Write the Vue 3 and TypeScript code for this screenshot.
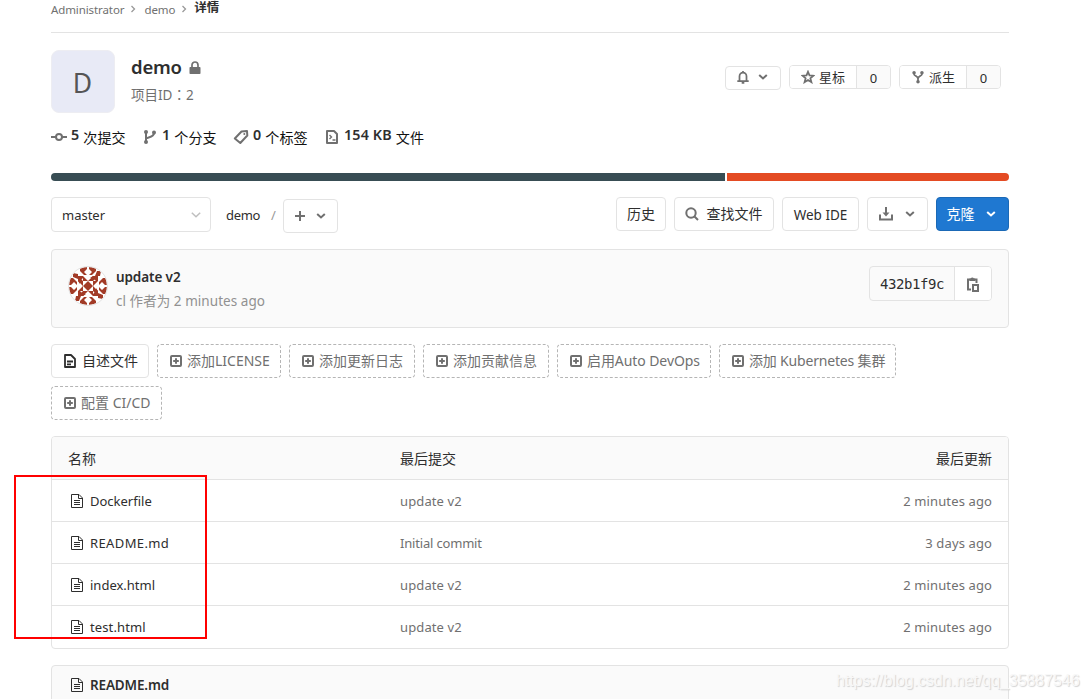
<script setup lang="ts">
interface FileRow { name: string; commit: string; updated: string; nameFit: string; commitFit: string }
interface Suggestion { label: string; width: number; fit?: string }

const files: FileRow[] = [
  { name: 'Dockerfile', commit: 'update v2', updated: '2 minutes ago', nameFit: 'even', commitFit: 'loose' },
  { name: 'README.md', commit: 'Initial commit', updated: '3 days ago', nameFit: 'wide', commitFit: 'tight' },
  { name: 'index.html', commit: 'update v2', updated: '2 minutes ago', nameFit: 'even', commitFit: 'loose' },
  { name: 'test.html', commit: 'update v2', updated: '2 minutes ago', nameFit: 'loose', commitFit: 'loose' },
]
const suggestions: Suggestion[] = [
  { label: '添加LICENSE', width: 124 },
  { label: '添加更新日志', width: 126 },
  { label: '添加贡献信息', width: 126 },
  { label: '启用Auto DevOps', width: 154, fit: 'snug' },
  { label: '添加 Kubernetes 集群', width: 177, fit: 'tight' },
  { label: '配置 CI/CD', width: 111 },
]
</script>

<template>
  <div class="page">
    <nav class="crumbs">
      <span>Administrator</span>
      <svg class="sep" viewBox="0 0 6 8"><path d="M1.500 1l3 3-3 3" /></svg>
      <span>demo</span>
      <svg class="sep" viewBox="0 0 6 8"><path d="M1.500 1l3 3-3 3" /></svg>
      <strong>详情</strong>
    </nav>

    <header class="project">
      <div class="avatar">D</div>
      <div class="title">
        <h1>demo
          <svg class="lock" viewBox="0 0 12 14"><path d="M1.300 6h9.400a.8.800 0 0 1 .8.800v5.400a.8.800 0 0 1-.8.800H1.300a.8.800 0 0 1-.8-.8V6.800a.8.800 0 0 1 .8-.8z" fill="#707070" /><path d="M3 6.500V4a3 3 0 0 1 6 0v2.500" fill="none" stroke="#707070" stroke-width="1.700" /></svg>
        </h1>
        <p>项目ID<span class="colon">：</span>2</p>
      </div>
      <div class="actions">
        <button class="bell">
          <svg class="i14" viewBox="0 0 16 16"><path d="M4 12V7a4 4 0 0 1 8 0v5M1.500 12.700h13M8 1v2M6.500 14.700h3" class="s" /></svg>
          <svg class="chev" viewBox="0 0 10 6"><path d="M1.200 1l3.800 3.500L8.800 1" /></svg>
        </button>
        <div class="counter">
          <button><svg class="i14" viewBox="0 0 16 16"><path d="M8 2l1.700 4.200 4.500.300-3.500 2.900 1.200 4.500L8 11.400l-3.900 2.500 1.200-4.500L1.800 6.500l4.500-.3z" class="s" /></svg>星标</button><span>0</span>
        </div>
        <div class="counter">
          <button><svg class="i14" viewBox="0 0 16 16"><path d="M3.500 3v1.500C3.500 7 8 7 8 10v3M12.500 3v1.500C12.500 7 8 7 8 10" class="s" /><circle cx="3.500" cy="3" r="2" class="f" /><circle cx="12.500" cy="3" r="2" class="f" /><circle cx="8" cy="13.500" r="2" class="f" /></svg>派生</button><span>0</span>
        </div>
      </div>
    </header>

    <div class="stats">
      <div class="stat"><svg viewBox="0 0 16 16"><path d="M0 8h5M11 8h5" class="s" /><circle cx="8" cy="8" r="3" class="s" /></svg><b>5</b><span>次提交</span></div>
      <div class="stat"><svg viewBox="0 0 16 16"><path d="M4 3v10M4 10c0-2 8-1 8-6" class="s" /><circle cx="4" cy="3" r="2" class="f" /><circle cx="12" cy="3.500" r="2" class="f" /><circle cx="4" cy="13" r="2" class="f" /></svg><b>1</b><span>个分支</span></div>
      <div class="stat"><svg viewBox="0 0 16 16"><path d="M8.500 2.500l5.500-.5.300 4.500-7 7.500-5.500-4.500z" class="s" stroke-linejoin="round" /><circle cx="11.300" cy="5" r="1" class="f" /></svg><b>0</b><span>个标签</span></div>
      <div class="stat"><svg viewBox="0 0 16 16"><path d="M3 2h7l3 3v9H3z" class="s" stroke-linejoin="round" /><path d="M5.500 6l2 2-2 2M8.500 11h3" class="s thin" /></svg><b>154 KB</b><span>文件</span></div>
    </div>

    <div class="langs"><i class="docker"></i><i class="html"></i></div>

    <div class="tree">
      <button class="branch"><span>master</span><svg class="chev light" viewBox="0 0 10 6"><path d="M.8.800L5 4.800 9.200.800" /></svg></button>
      <span class="path">demo</span><span class="slash">/</span>
      <button class="add"><svg class="plus" viewBox="0 0 10 10"><path d="M5 0v10M0 5h10" class="s" /></svg><svg class="chev" viewBox="0 0 10 6"><path d="M1.200 1l3.800 3.500L8.800 1" /></svg></button>
      <div class="tools">
        <button class="w50">历史</button>
        <button class="w100"><svg class="search" viewBox="0 0 14 14"><circle cx="6" cy="6" r="4.700" class="s" /><path d="M9.500 9.500l3.500 3.500" class="s" /></svg>查找文件</button>
        <button class="w77">Web IDE</button>
        <button class="w61"><svg class="i14" viewBox="0 0 14 14"><path d="M7 0v7M1 7.500v5h12v-5" class="s" /><path d="M3.500 5.500h7L7 9.500z" class="f" /></svg><svg class="chev" viewBox="0 0 10 6"><path d="M1.200 1l3.800 3.500L8.800 1" /></svg></button>
        <button class="clone">克隆<svg class="chev" viewBox="0 0 10 6"><path d="M1.200 1l3.800 3.500L8.800 1" /></svg></button>
      </div>
    </div>

    <section class="commit">
      <svg class="identicon" viewBox="0 0 40 40">
        <defs><clipPath id="face"><circle cx="20" cy="20" r="19" /></clipPath></defs>
        <circle cx="20" cy="20" r="19.500" fill="#fff" />
        <g clip-path="url(#face)" fill="#a23b27">
          <path d="M20 15l5 5-5 5-5-5z" />
          <g v-for="r in [0, 90, 180, 270]" :key="r" :transform="`rotate(${r} 20 20)`">
            <path d="M10 10h5l5 5h-5v-3l-3 3v3l-2-3zM30 10h-5l-5 5h5zM12 1l7-1v3l-3 3 3 3h-3l-4-4zM28 1l-7-1v3l3 3-3 3h3l4-4zM5 7l5 1v5l-5-2z" />
          </g>
        </g>
        <circle cx="20" cy="20" r="19.500" fill="none" stroke="#e3e3e3" />
      </svg>
      <div class="info"><strong>update v2</strong><p>cl 作者为 2 minutes ago</p></div>
      <div class="sha"><code>432b1f9c</code><button><svg viewBox="0 0 14 16"><path d="M5 13.500H2v-10h8.500V7" class="s" /><path d="M3.500 2.500h1.200a1.800 1.800 0 0 1 3.200 0h1.300V5H3.500z" class="f" /><path d="M7 9h5v6H7z" class="s" /></svg></button></div>
    </section>

    <div class="suggest">
      <button class="readme"><svg viewBox="0 0 12 14"><path d="M1 1h6l4 4v8H1z" class="s" stroke-linejoin="round" /><path d="M3 7.500h6M3 10.300h4" class="s" /></svg>自述文件</button>
      <button v-for="s in suggestions" :key="s.label" class="dashed" :style="{ width: s.width + 'px' }"><svg viewBox="0 0 12 12"><rect x="1" y="1" width="10" height="10" rx="1" class="s" /><path d="M6 3.200v5.600M3.200 6h5.600" class="s" /></svg><span :class="s.fit">{{ s.label }}</span></button>
    </div>

    <section class="files">
      <div class="row head"><span class="name">名称</span><span class="msg">最后提交</span><span class="when">最后更新</span></div>
      <div v-for="f in files" :key="f.name" class="row">
        <span class="name"><svg class="doc" viewBox="0 0 12 14"><path d="M.5.500h7.500l3.500 3.500v9.500H.5zM7.500.500V4.500h4M3 6.500h6M3 8.500h6M3 10.500h6" /></svg><span :class="f.nameFit">{{ f.name }}</span></span>
        <span class="msg" :class="f.commitFit">{{ f.commit }}</span><span class="when loose">{{ f.updated }}</span>
      </div>
    </section>

    <section class="readme-box"><svg class="doc" viewBox="0 0 12 14"><path d="M.5.500h7.500l3.500 3.500v9.500H.5zM7.500.500V4.500h4M3 6.500h6M3 8.500h6M3 10.500h6" /></svg><strong>README.md</strong></section>

    <div class="highlight"></div>
    <div class="watermark">https://blog.csdn.net/qq_35887546</div>
  </div>
</template>

<style>
body { background: #fff; overflow: hidden; }
</style>
<style scoped>
* { box-sizing: border-box; }
.page { position: relative; width: 1089px; height: 699px; overflow: hidden; padding: 0 80px 0 51px; font: 14px/20px "Noto Sans", "Noto Sans CJK SC", sans-serif; color: #2e2e2e; }
button { font: inherit; color: inherit; background: #fff; border: 1px solid #e3e3e3; border-radius: 4px; padding: 0; display: flex; align-items: center; white-space: nowrap; }
svg { flex: none; display: block; }
p, h1 { margin: 0; }
.s { fill: none; stroke: #707070; stroke-width: 2; }
.thin { stroke-width: 1.4; }
.f { fill: #707070; }
.chev { width: 10px; height: 6px; }
.chev path { fill: none; stroke: #707070; stroke-width: 2; }
.chev.light path { stroke: #bfbfbf; stroke-width: 1.5; }
.i14 { width: 14px; height: 14px; }
.tight { letter-spacing: -.18px; }
.snug { letter-spacing: -.08px; }
.even { letter-spacing: 0; }
.loose { letter-spacing: .12px; }
.wide { letter-spacing: .38px; }

.crumbs { height: 33px; border-bottom: 1px solid #e3e3e3; display: flex; align-items: flex-start; font-size: 11.5px; color: #707070; }
.crumbs span { letter-spacing: -.1px; }
.crumbs strong { color: #2e2e2e; font-size: 12.5px; margin: -2px 0 0 -1px; }
.sep { width: 6px; height: 8px; margin: 5px 8px 0 6px; }
.sep path { fill: none; stroke: #999; stroke-width: 1.3; }

.project { height: 80px; padding-top: 17px; display: flex; }
.avatar { width: 64px; height: 63px; border-radius: 8px; background: #e8eaf6; border: 1px solid #ededf2; color: #555; font-size: 26.5px; display: flex; align-items: center; justify-content: center; padding: 2px 1px 0 0; }
.title { margin-left: 16px; flex: 1; }
h1 { font-size: 18.5px; line-height: 24px; font-weight: 600; display: flex; align-items: center; margin-top: 5px; letter-spacing: -.2px; }
.lock { width: 12px; height: 14px; margin: 1px 0 0 7px; }
.title p { color: #707070; margin-top: 5px; font-size: 13.5px; }
.colon { font-family: "Noto Sans CJK TC", sans-serif; }
.actions { display: flex; gap: 8px; margin: 15px 8px 0 0; align-items: flex-start; }
.bell { width: 56px; height: 24px; margin-top: 1px; padding: 0 0 2px 10px; gap: 8px; }
.counter { display: flex; width: 102px; height: 24px; border: 1px solid #e3e3e3; border-radius: 4px; overflow: hidden; }
.counter button { border: 0; width: 66px; padding-left: 11px; gap: 4px; border-radius: 0; font-size: 13px; }
.counter > span { flex: 1; border-left: 1px solid #e3e3e3; background: #fafafa; text-align: center; line-height: 24px; font-size: 13px; }

.stats { display: flex; height: 60px; padding-top: 16px; }
.stat { display: flex; width: 91px; height: 16px; align-items: center; white-space: nowrap; color: #111; }
.stat svg { width: 16px; height: 16px; }
.stat b { margin: -4px 4px 0 4px; font-weight: 600; font-size: 14.3px; letter-spacing: .15px; color: #2e2e2e; }
.stat span { font-size: 14.1px; margin-top: 1px; }
.stat:last-child { width: auto; }

.langs { display: flex; gap: 2px; height: 8px; border-radius: 4px; overflow: hidden; }
.langs .docker { width: 674px; background: #384d54; }
.langs .html { flex: 1; background: #e44b23; }

.tree { display: flex; margin-top: 16px; height: 36px; align-items: flex-start; }
.branch { width: 160px; height: 35px; padding: 1px 9px 0 10px; justify-content: space-between; font-size: 13px; }
.path { margin: 8px 0 0 15px; width: 45px; font-size: 13px; letter-spacing: -.3px; }
.slash { margin-top: 8px; color: #999; width: 12px; font-size: 13px; }
.add { width: 55px; height: 34px; margin-top: 2px; padding-left: 11px; gap: 11px; }
.plus { width: 10px; height: 10px; }
.tools { margin-left: auto; display: flex; gap: 8px; }
.tools button { height: 34px; justify-content: center; }
.w50 { width: 50px; }
.tools .w77 { width: 77px; font-size: 13.5px; padding-top: 1px; }
.w100 { width: 100px; gap: 8px; padding-right: 1px; }
.search { width: 14px; height: 14px; }
.tools .w61 { width: 61px; gap: 12px; padding-right: 2px; }
.tools .clone { width: 73px; gap: 11px; padding-right: 3px; color: #fff; background: #1f78d1; border-color: #1b69b6; }
.clone .chev path { stroke: #fff; }

.commit { margin-top: 16px; height: 79px; border: 1px solid #e3e3e3; border-radius: 4px; background: #fafafa; display: flex; padding: 16px; }
.identicon { width: 40px; height: 40px; }
.info { margin: 1px 0 0 8px; flex: 1; font-size: 13.5px; }
.info strong { font-weight: 600; display: block; letter-spacing: -.1px; }
.info p { color: #919191; margin-top: 4px; letter-spacing: .05px; }
.sha { display: flex; width: 123px; height: 35px; border: 1px solid #e3e3e3; border-radius: 4px; overflow: hidden; }
.sha code { width: 84px; text-align: center; font: 14px/34px "DejaVu Sans Mono", monospace; letter-spacing: -.4px; }
.sha button { border: 0; border-left: 1px solid #e3e3e3; border-radius: 0; flex: 1; justify-content: center; }
.sha svg { width: 14px; height: 16px; }

.suggest { display: flex; flex-wrap: wrap; gap: 8px; margin-top: 16px; }
.suggest button { height: 34px; padding-left: 12px; }
.readme { width: 98px; }
.readme svg { width: 12px; height: 14px; margin-right: 6px; }
.readme .s { stroke: #2e2e2e; stroke-width: 1.8; }
.suggest .dashed { border: 1px dashed #b5b5b5; color: #707070; }
.dashed svg { width: 12px; height: 12px; margin-right: 5px; }

.files { margin-top: 16px; border: 1px solid #e3e3e3; border-radius: 4px; overflow: hidden; }
.row { height: 42px; display: flex; align-items: center; border-top: 1px solid #e3e3e3; padding: 1px 16px 0; color: #707070; font-size: 13px; }
.row:last-child { height: 43px; padding-bottom: 1px; }
.head { border-top: 0; background: #fafafa; color: #2e2e2e; font-size: 14px; }
.name { width: 332px; display: flex; align-items: center; color: #2e2e2e; }
.doc { width: 12px; height: 14px; margin: 0 7px 0 3px; }
.doc path { fill: none; stroke: #2e2e2e; stroke-width: 1; }
.msg { flex: 1; }

.readme-box { margin-top: 16px; height: 60px; border: 1px solid #e3e3e3; border-radius: 4px; background: #fafafa; padding: 9px 16px; display: flex; align-items: flex-start; }
.readme-box .doc { margin-top: 3px; }
.readme-box strong { font-weight: 600; font-size: 13.5px; letter-spacing: -.15px; }

.highlight { position: absolute; left: 14px; top: 475px; width: 193px; height: 164px; border: 2px solid #f00; }
.watermark { position: absolute; left: 836px; top: 671px; font: 16px/20px "Liberation Sans", sans-serif; letter-spacing: -.06px; color: #f8f8f8; text-shadow: 1px 1px 1px #d2d2d2; white-space: nowrap; }
</style>
